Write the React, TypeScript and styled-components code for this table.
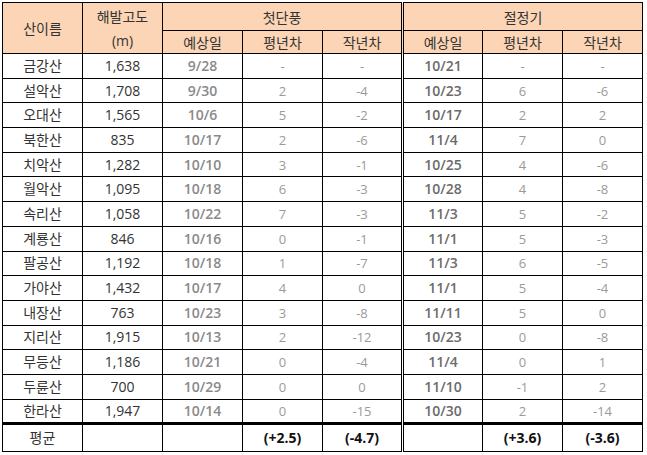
import React from 'react';
import styled, { createGlobalStyle } from 'styled-components';

// Estilos globais: sem margem, fonte padrão
const GlobalStyle = createGlobalStyle`
  body {
    margin: 0;
    padding: 2px;
    background: #fff;
    font-family: "Open Sans", "Noto Sans CJK KR", sans-serif;
  }
`;

const Table = styled.table`
  border-collapse: collapse;
  table-layout: fixed;
  width: 640px;
  font-size: 14px;
  color: #333;
`;

const Head = styled.th<{ $split?: boolean; $h?: number }>`
  background: #fbd5b5;
  font-weight: 400;
  font-size: 14px;
  border: 1px solid #000;
  border-left: ${(p) => (p.$split ? '3px double #000' : '1px solid #000')};
  height: ${(p) => p.$h ?? 22}px;
  padding: 0;
  text-align: center;
  vertical-align: middle;
`;

const Stack = styled.div`
  display: flex;
  flex-direction: column;
  gap: 5px;
  line-height: 19px;
`;

const Row = styled.tr`
  height: 24.7px;
`;

const Cell = styled.td<{ $tone?: 'name' | 'date1' | 'date2' | 'diff' | 'avg'; $split?: boolean }>`
  border: 1px solid #000;
  border-left: ${(p) => (p.$split ? '3px double #000' : '1px solid #000')};
  padding: 0;
  text-align: center;
  vertical-align: middle;
  line-height: 18px;
  font-weight: ${(p) => (p.$tone === 'date1' || p.$tone === 'date2' ? 600 : p.$tone === 'avg' ? 700 : 400)};
  font-size: ${(p) => (p.$tone === 'diff' ? '13px' : '14px')};
  color: ${(p) =>
    p.$tone === 'date1' ? '#8a8a8a' :
    p.$tone === 'date2' ? '#6b6b6b' :
    p.$tone === 'diff' ? '#9a9a9a' :
    p.$tone === 'avg' ? '#111' : '#333'};
`;

const FootRow = styled.tr`
  height: 28px;
  & > td {
    border-top: 3px solid #000;
  }
`;

type Mountain = [string, string, string, string, string, string, string, string];

const rows: Mountain[] = [
  ['금강산', '1,638', '9/28', '-', '-', '10/21', '-', '-'],
  ['설악산', '1,708', '9/30', '2', '-4', '10/23', '6', '-6'],
  ['오대산', '1,565', '10/6', '5', '-2', '10/17', '2', '2'],
  ['북한산', '835', '10/17', '2', '-6', '11/4', '7', '0'],
  ['치악산', '1,282', '10/10', '3', '-1', '10/25', '4', '-6'],
  ['월악산', '1,095', '10/18', '6', '-3', '10/28', '4', '-8'],
  ['속리산', '1,058', '10/22', '7', '-3', '11/3', '5', '-2'],
  ['계룡산', '846', '10/16', '0', '-1', '11/1', '5', '-3'],
  ['팔공산', '1,192', '10/18', '1', '-7', '11/3', '6', '-5'],
  ['가야산', '1,432', '10/17', '4', '0', '11/1', '5', '-4'],
  ['내장산', '763', '10/23', '3', '-8', '11/11', '5', '0'],
  ['지리산', '1,915', '10/13', '2', '-12', '10/23', '0', '-8'],
  ['무등산', '1,186', '10/21', '0', '-4', '11/4', '0', '1'],
  ['두륜산', '700', '10/29', '0', '0', '11/10', '-1', '2'],
  ['한라산', '1,947', '10/14', '0', '-15', '10/30', '2', '-14'],
];

// Tabela de previsão de folhagem de outono
const App: React.FC = () => (
  <>
    <GlobalStyle />
    <Table>
      <colgroup>
        <col style={{ width: 80 }} />
        <col style={{ width: 80 }} />
        <col style={{ width: 80 }} />
        <col style={{ width: 80 }} />
        <col style={{ width: 80 }} />
        <col style={{ width: 80 }} />
        <col style={{ width: 80 }} />
        <col style={{ width: 80 }} />
      </colgroup>
      <thead>
        <tr>
          <Head rowSpan={2} $h={27}>산이름</Head>
          <Head rowSpan={2} $h={27}>
            <Stack>
              <span>해발고도</span>
              <span>(m)</span>
            </Stack>
          </Head>
          <Head colSpan={3} $h={27}>첫단풍</Head>
          <Head colSpan={3} $h={27} $split>절정기</Head>
        </tr>
        <tr>
          <Head>예상일</Head>
          <Head>평년차</Head>
          <Head>작년차</Head>
          <Head $split>예상일</Head>
          <Head>평년차</Head>
          <Head>작년차</Head>
        </tr>
      </thead>
      <tbody>
        {rows.map((r) => (
          <Row key={r[0]}>
            <Cell $tone="name">{r[0]}</Cell>
            <Cell $tone="name">{r[1]}</Cell>
            <Cell $tone="date1">{r[2]}</Cell>
            <Cell $tone="diff">{r[3]}</Cell>
            <Cell $tone="diff">{r[4]}</Cell>
            <Cell $tone="date2" $split>{r[5]}</Cell>
            <Cell $tone="diff">{r[6]}</Cell>
            <Cell $tone="diff">{r[7]}</Cell>
          </Row>
        ))}
        <FootRow>
          <Cell $tone="name">평균</Cell>
          <Cell />
          <Cell />
          <Cell $tone="avg">(+2.5)</Cell>
          <Cell $tone="avg">(-4.7)</Cell>
          <Cell $split />
          <Cell $tone="avg">(+3.6)</Cell>
          <Cell $tone="avg">(-3.6)</Cell>
        </FootRow>
      </tbody>
    </Table>
  </>
);

export default App;
